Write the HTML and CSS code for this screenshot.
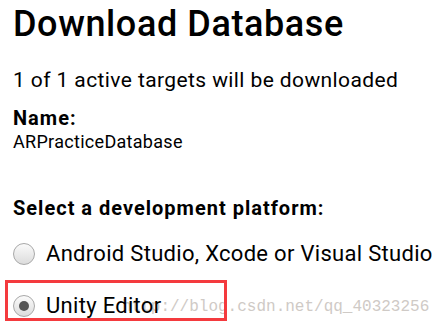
FILE: index.html
```html
<!DOCTYPE html>
<html lang="en">
<head>
  <meta charset="UTF-8" />
  <title>Download Database</title>
  <link rel="stylesheet" href="styles.css">
</head>
<body>
  <h1>Download Database</h1>
  <p class="info">1 of 1 active targets will be downloaded</p>

  <div class="label">Name:</div>
  <div class="db-name">ARPracticeDatabase</div>

  <div class="label select-title">Select a development platform:</div>

  <div class="option first">
    <span class="radio"></span>
    <span>Android Studio, Xcode or Visual Studio</span>
  </div>

  <div class="highlight">
    <div class="option">
      <span class="radio checked"></span>
      <span>Unity Editor</span>
    </div>
  </div>

  <div class="watermark">http://blog.csdn.net/qq_40323256</div>
</body>
</html>
```

FILE: styles.css
```css
body {
  font-family: Roboto, "Liberation Sans", sans-serif;
  color: #000;
  background: #fff;
  margin: 0;
  padding: 0 0 0 13px;
  position: relative;
  height: 330px;
  overflow: hidden;
}
h1 {
  font-size: 36px;
  font-weight: 500;
  letter-spacing: 0.6px;
  line-height: 40px;
  margin: 4px 0 0 0;
}
.info {
  font-size: 21px;
  letter-spacing: 0.4px;
  line-height: 24px;
  margin: 24px 0 0 0;
}
.label {
  font-size: 20px;
  font-weight: 700;
  letter-spacing: 1px;
  line-height: 22px;
  margin-top: 15px;
}
.db-name {
  font-size: 18px;
  letter-spacing: 0.3px;
  line-height: 20px;
  margin-top: 3px;
}
.select-title {
  margin-top: 45px;
}
.option {
  display: flex;
  align-items: center;
  gap: 11px;
  font-size: 22px;
  letter-spacing: 0.3px;
  line-height: 24px;
}
.option.first {
  margin-top: 23px;
}
.radio {
  width: 20px;
  height: 20px;
  border: 1px solid #a8a8a8;
  border-radius: 50%;
  background: linear-gradient(#fafafa, #dcdcdc);
  box-sizing: content-box;
  position: relative;
  flex: none;
}
.radio.checked::after {
  content: "";
  position: absolute;
  left: 5px;
  top: 5px;
  width: 10px;
  height: 10px;
  border-radius: 50%;
  background: #555;
}
.highlight {
  width: 211px;
  margin: 14px 0 0 -8px;
  padding: 11px 0 0 5px;
  border: 3px solid #f43a3e;
}
.watermark {
  position: absolute;
  left: 122px;
  top: 298px;
  font-family: "Liberation Mono", monospace;
  font-size: 16px;
  color: #cfcac6;
  z-index: -1;
}
```
